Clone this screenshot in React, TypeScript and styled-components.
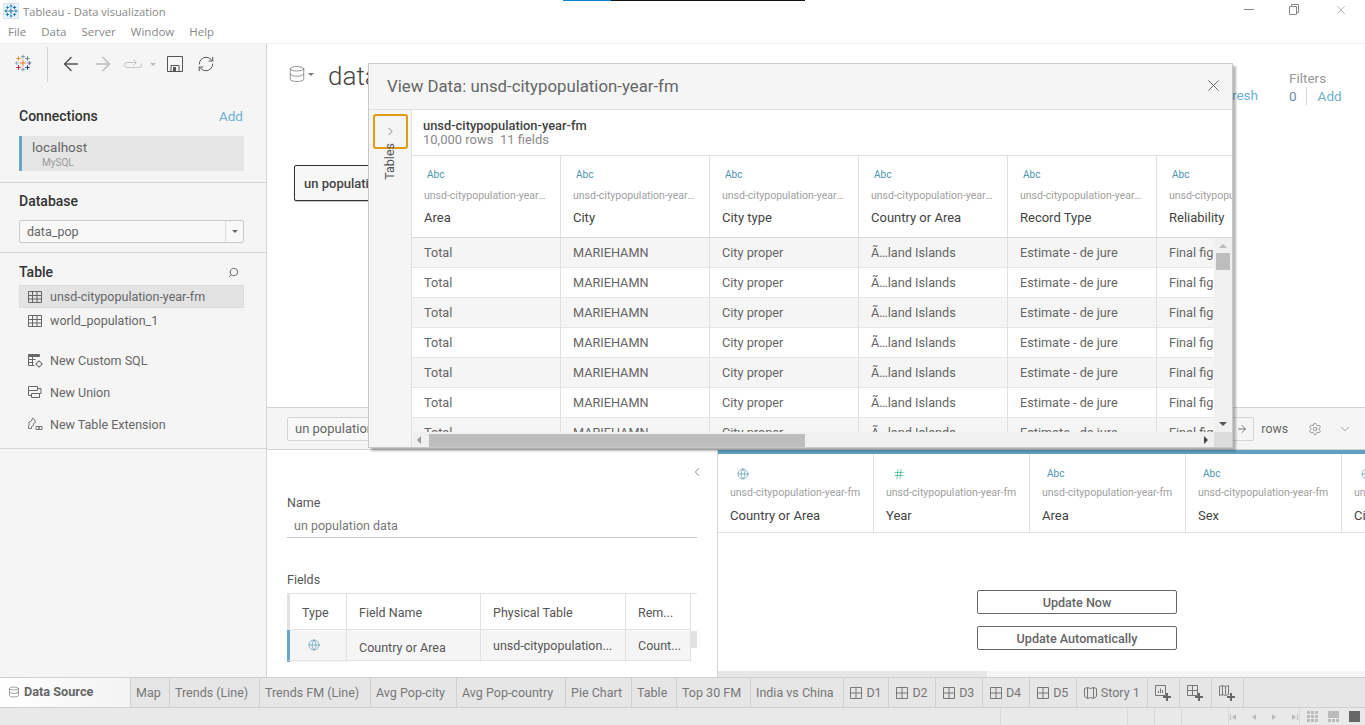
import React from 'react'
import styled, { createGlobalStyle } from 'styled-components'
import { ArrowLeft, ArrowRight, ChevronDown, ChevronLeft, ChevronRight, Database, Globe, Hash, RefreshCw, Search, Settings, X } from 'lucide-react'

const GlobalStyle = createGlobalStyle`
  html, body { margin: 0; padding: 0; background: #fff; }
  * { box-sizing: border-box; }
  body { font-family: Roboto, "Liberation Sans", sans-serif; color: #555; overflow: hidden; }
`

const Page = styled.div`
  position: relative;
  width: 1365px;
  height: 725px;
  overflow: hidden;
  display: flex;
  flex-direction: column;
`

const TitleBar = styled.div`
  position: relative;
  height: 22px;
  display: flex;
  align-items: center;
  padding: 0 0 0 3px;
  gap: 4px;
  font-family: "Open Sans", sans-serif;
  font-size: 11.2px;
  color: #888;
`

const TitleLogo = styled.div`
  width: 16px;
  height: 16px;
  background: #eef5fa;
  border: 1px solid #d5e3ec;
  display: flex;
  align-items: center;
  justify-content: center;
`

const LoadBar = styled.div`
  position: absolute;
  left: 563px;
  top: 0;
  width: 242px;
  height: 1px;
  background: linear-gradient(90deg, #0a84e0 0 48px, #111 48px);
`

const WindowButtons = styled.div`
  margin-left: auto;
  display: flex;
  align-items: center;
  gap: 35px;
  padding: 0 17px 3px 0;
  color: #888;
  svg { flex: none; }
`

const MenuBar = styled.div`
  height: 22px;
  display: flex;
  align-items: center;
  padding: 0 0 2px 8px;
  gap: 15px;
  font-family: "Open Sans", sans-serif;
  font-size: 11.5px;
  color: #888;
  border-bottom: 1px solid #ececec;
`

const Main = styled.div`
  height: 633px;
  display: flex;
`

const Sidebar = styled.aside`
  width: 267px;
  flex: none;
  background: #f5f5f5;
  border-right: 1px solid #d4d4d4;
  display: flex;
  flex-direction: column;
`

const Toolbar = styled.div`
  height: 60px;
  display: flex;
  align-items: flex-start;
  padding-top: 3px;
`

const ToolLogo = styled.div`
  width: 48px;
  height: 35px;
  border-right: 1px solid #d4d4d4;
  padding: 7px 0 0 14px;
`

const ToolIcons = styled.div`
  display: flex;
  align-items: center;
  padding: 6px 0 0 12px;
`

const ToolSlot = styled.span<{ $m: string }>`
  display: flex;
  margin: ${p => p.$m};
`

const Caret = styled.span`
  display: inline-block;
  flex: none;
  width: 0;
  height: 0;
  border-left: 3px solid transparent;
  border-right: 3px solid transparent;
  border-top: 3px solid ${p => p.color || '#bbb'};
`

const Section = styled.section<{ $h: number }>`
  height: ${p => p.$h}px;
  padding: 0 22px 0 19px;
  border-bottom: 1px solid #d4d4d4;
  flex: none;
`

const SectionHead = styled.div<{ $top: number }>`
  display: flex;
  justify-content: space-between;
  align-items: center;
  height: 18px;
  margin-top: ${p => p.$top}px;
  font-size: 14px;
  font-weight: 500;
  color: #333;
`

const AddLink = styled.span`
  font-size: 13.5px;
  font-weight: 400;
  margin-right: 1px;
  color: #6eb0d0;
`

const ConnectionBox = styled.div`
  height: 35px;
  margin-top: 11px;
  background: #e6e6e6;
  border-left: 3px solid #69a7c8;
  padding: 3px 0 0 10px;
  font-size: 13.5px;
  line-height: 16px;
  color: #666;
  small { display: block; font-size: 10px; line-height: 12px; margin-top: 2px; padding-left: 10px; color: #999; }
`

const SelectBox = styled.div`
  height: 23px;
  margin-top: 10px;
  background: #f8f8f8;
  border: 1px solid #c8c8c8;
  border-radius: 2px;
  display: flex;
  align-items: center;
  font-size: 12.5px;
  color: #666;
  padding-left: 7px;
`

const SelectValue = styled.span`
  flex: 1;
`

const SelectButton = styled.div`
  width: 18px;
  height: 21px;
  border-left: 1px solid #ddd;
  display: flex;
  align-items: center;
  justify-content: center;
`

const TableItem = styled.div<{ $on?: boolean }>`
  height: 23px;
  display: flex;
  align-items: center;
  gap: 8px;
  padding-left: 8px;
  font-size: 12.5px;
  color: #666;
  background: ${p => (p.$on ? '#e3e3e3' : 'transparent')};
  border: 1px solid ${p => (p.$on ? '#dcdcdc' : 'transparent')};
  margin-top: ${p => (p.$on ? 4 : 1)}px;
`

const ActionItem = styled.div<{ $top: number }>`
  height: 20px;
  display: flex;
  align-items: center;
  padding-left: 9px;
  margin-top: ${p => p.$top}px;
  font-size: 12.5px;
  color: #666;
`

const ActionIcon = styled.span`
  width: 22px;
  flex: none;
  display: flex;
`

const Workspace = styled.div`
  flex: 1;
  min-width: 0;
  display: flex;
  flex-direction: column;
`

const Canvas = styled.div`
  height: 364px;
  border-bottom: 1px solid #d4d4d4;
  padding: 0 0 0 21px;
  position: relative;
`

const CanvasHeader = styled.div`
  display: flex;
  align-items: flex-start;
  height: 121px;
  padding-top: 15px;
`

const DbMark = styled.div`
  display: flex;
  align-items: center;
  gap: 2px;
  margin-top: 6px;
  width: 40px;
  color: #777;
`

const DataTitle = styled.div`
  font-size: 26px;
  line-height: 34px;
  color: #444;
  font-weight: 300;
`

const HeaderRight = styled.div`
  margin-left: auto;
  display: flex;
  font-size: 13.5px;
  color: #6eb0d0;
  padding-top: 28px;
`

const Filters = styled.div`
  margin-left: 31px;
  width: 76px;
  margin-top: -18px;
  color: #999;
  line-height: 18px;
`

const FilterRow = styled.div`
  display: flex;
  align-items: center;
  b { font-weight: 400; color: #6f8ea0; padding-right: 9px; border-right: 1px solid #d4d4d4; margin-right: 11px; }
  span { color: #6eb0d0; }
`

const LogicalTable = styled.div`
  width: 170px;
  height: 36px;
  margin-left: 6px;
  border: 1px solid #333;
  border-radius: 2px;
  background: #f7f7f7;
  display: flex;
  align-items: center;
  padding-left: 9px;
  font-size: 13px;
  font-weight: 500;
  color: #444;
  box-shadow: 0 1px 1px rgba(0, 0, 0, 0.25);
`

const Strip = styled.div`
  height: 42px;
  background: #f5f5f5;
  border-bottom: 1px solid #d4d4d4;
  display: flex;
  align-items: center;
  padding: 0 13px 0 20px;
  font-size: 13px;
  color: #666;
`

const StripInput = styled.div`
  width: 180px;
  height: 24px;
  border: 1px solid #d4d4d4;
  border-radius: 2px;
  padding: 3px 0 0 7px;
  background: #f8f8f8;
`

const StripArrow = styled.div`
  margin-left: auto;
  width: 80px;
  height: 24px;
  border: 1px solid #d4d4d4;
  border-radius: 2px;
  display: flex;
  align-items: center;
  justify-content: flex-end;
  padding-right: 5px;
  color: #777;
`

const StripText = styled.span`
  margin: 0 20px 0 7px;
  font-size: 12.3px;
`

const Lower = styled.div`
  flex: 1;
  display: flex;
  min-height: 0;
`

const DetailPane = styled.div`
  width: 451px;
  flex: none;
  border-right: 1px solid #d4d4d4;
  padding: 0 20px;
  position: relative;
  overflow: hidden;
`

const CollapseBtn = styled.div`
  display: flex;
  justify-content: flex-end;
  padding-top: 15px;
  height: 45px;
  margin-right: -7px;
  color: #777;
`

const FieldLabel = styled.div`
  font-size: 12.5px;
  line-height: 16px;
  color: #555;
`

const NameInput = styled.div`
  width: 410px;
  height: 24px;
  margin-top: 3px;
  border-bottom: 1px solid #c8c8c8;
  padding: 4px 0 0 7px;
  font-size: 12.5px;
  color: #777;
`

const FieldsBlock = styled.div`
  margin-top: 34px;
`

const FieldsTable = styled.div`
  margin-top: 5px;
  width: 410px;
  height: 69px;
  overflow: hidden;
  display: grid;
  grid-template-columns: 60px 134px 145px 65px;
  grid-auto-rows: 36px 31px 20px;
  font-size: 12.5px;
  color: #555;
  border-top: 1px solid #e2e2e2;
  position: relative;
`

const FieldsCell = styled.div<{ $first?: boolean; $row?: boolean; $center?: boolean; $drop?: number }>`
  display: flex;
  align-items: center;
  justify-content: ${p => (p.$center ? 'center' : 'flex-start')};
  padding: ${p => (p.$center ? '0 8px 0 0' : `${p.$drop || 0}px 0 0 12px`)};
  white-space: nowrap;
  background: ${p => (p.$row ? '#f5f5f5' : '#fff')};
  border-right: 1px solid #e2e2e2;
  border-bottom: 1px solid #e2e2e2;
  border-left: ${p => (p.$first ? `3px solid ${p.$row ? '#69a7c8' : '#e2e2e2'}` : 'none')};
`

const FieldsThumb = styled.div`
  position: absolute;
  right: 0;
  top: 37px;
  width: 6px;
  height: 17px;
  background: #e2e2e2;
`

const PreviewPane = styled.div`
  flex: 1;
  min-width: 0;
  display: flex;
  flex-direction: column;
  border-top: 4px solid #5f9fc0;
  overflow: hidden;
`

const PreviewHead = styled.div`
  display: flex;
  height: 79px;
  border-bottom: 1px solid #e0e0e0;
  flex: none;
`

const PreviewCol = styled.div`
  width: 156px;
  flex: none;
  border-right: 1px solid #e0e0e0;
  padding: 12px 0 0 12px;
  white-space: nowrap;
  overflow: hidden;
`

const TypeIcon = styled.div<{ $color?: string; $pad: number }>`
  height: 15px;
  padding-left: ${p => p.$pad}px;
  display: flex;
  align-items: center;
  font-size: 10px;
  color: ${p => p.$color || '#4f95ad'};
`

const SourceText = styled.div`
  font-size: 10.5px;
  line-height: 14px;
  margin-top: 5px;
  color: #a0a0a0;
`

const ColName = styled.div`
  font-size: 13px;
  line-height: 16px;
  margin-top: 8px;
  color: #444;
`

const UpdateArea = styled.div`
  flex: 1;
  padding: 57px 0 0 259px;
  display: flex;
  flex-direction: column;
  gap: 12px;
`

const UpdateButton = styled.button`
  width: 200px;
  height: 24px;
  padding: 0;
  background: #fff;
  border: 1px solid #666;
  border-radius: 2px;
  font-family: inherit;
  font-size: 12.6px;
  font-weight: 500;
  color: #666;
`

const BottomScroll = styled.div`
  height: 6px;
  background: #f5f5f5;
  flex: none;
  div { width: 269px; height: 6px; background: #e6e6e6; }
`

const Tabs = styled.div`
  height: 31px;
  background: #e6e6e6;
  border-top: 1px solid #d0d0d0;
  border-bottom: 1px solid #d0d0d0;
  display: flex;
  flex: none;
`

const DataSourceTab = styled.div`
  width: 131px;
  background: linear-gradient(90deg, #fff, #f3f3f3);
  border-right: 1px solid #d0d0d0;
  display: flex;
  align-items: center;
  gap: 4px;
  padding: 0 0 2px 8px;
  font-size: 12.7px;
  font-weight: 700;
  color: #666;
`

const Tab = styled.div<{ $w: number }>`
  width: ${p => p.$w}px;
  flex: none;
  border-right: 1px solid #d0d0d0;
  display: flex;
  align-items: center;
  justify-content: center;
  gap: 4px;
  font-size: 12.5px;
  color: #777;
`

const SheetTab = styled(Tab)`
  justify-content: flex-start;
  padding-left: 5px;
  white-space: nowrap;
`

const StatusBar = styled.div`
  flex: 1;
  background: #e9e9e9;
  display: flex;
  justify-content: flex-end;
`

const StatusCell = styled.div<{ $w: number }>`
  width: ${p => p.$w}px;
  flex: none;
  border-left: 1px solid #d8d8d8;
  display: flex;
  align-items: center;
  justify-content: center;
  gap: 12px;
  color: #bbb;
`

const ViewCell = styled(StatusCell)`
  gap: 10px;
  justify-content: flex-start;
  padding-left: 7px;
`

const ViewModal = styled.div`
  position: absolute;
  left: 368px;
  top: 63px;
  width: 865px;
  height: 385px;
  background: #fff;
  border: 1px solid #c8c8c8;
  box-shadow: 3px 3px 2px rgba(0, 0, 0, 0.28);
  display: flex;
  flex-direction: column;
`

const ModalHeader = styled.div`
  height: 46px;
  background: #f5f5f5;
  border-bottom: 1px solid #e0e0e0;
  display: flex;
  align-items: center;
  justify-content: space-between;
  padding: 0 9px 2px 18px;
  font-size: 16.8px;
  color: #666;
  flex: none;
`

const ModalBody = styled.div`
  flex: 1;
  min-height: 0;
  display: flex;
`

const TablesRail = styled.div`
  width: 43px;
  flex: none;
  background: #f5f5f5;
  border-right: 1px solid #e0e0e0;
  padding: 4px 0 0 4px;
`

const RailToggle = styled.div`
  width: 35px;
  height: 35px;
  border: 2px solid #e59a14;
  border-radius: 3px;
  display: flex;
  align-items: center;
  justify-content: center;
  color: #555;
`

const RailLabel = styled.div`
  writing-mode: vertical-rl;
  transform: rotate(180deg);
  margin: -6px 0 0 9px;
  font-size: 12.5px;
  line-height: 16px;
  color: #555;
`

const GridArea = styled.div`
  flex: 1;
  min-width: 0;
  display: flex;
  flex-direction: column;
`

const GridTitle = styled.div`
  height: 46px;
  flex: none;
  padding: 9px 0 0 11px;
  border-bottom: 1px solid #e0e0e0;
  font-size: 13px;
  line-height: 14px;
  color: #8a8a8a;
  strong { display: block; font-weight: 500; font-size: 12.9px; color: #444; }
`

const GridHead = styled.div`
  height: 82px;
  flex: none;
  display: flex;
  overflow: hidden;
  border-bottom: 1px solid #d8d8d8;
`

const GridCol = styled.div`
  width: 149px;
  flex: none;
  border-right: 1px solid #e0e0e0;
  padding: 11px 0 0 12px;
  white-space: nowrap;
  overflow: hidden;
`

const GridSource = styled(SourceText)`
  width: 123px;
  margin-top: 7px;
  overflow: hidden;
  text-overflow: ellipsis;
`

const GridName = styled(ColName)`
  margin-top: 7px;
`

const GridMiddle = styled.div`
  flex: 1;
  min-height: 0;
  display: flex;
`

const GridRows = styled.div`
  flex: 1;
  min-width: 0;
  overflow: hidden;
`

const GridRow = styled.div<{ $alt: boolean }>`
  height: 30px;
  display: flex;
  background: ${p => (p.$alt ? '#f5f5f5' : '#fff')};
  border-bottom: 1px solid #e6e6e6;
`

const GridCell = styled.div`
  width: 149px;
  flex: none;
  border-right: 1px solid #e0e0e0;
  padding-left: 12px;
  display: flex;
  align-items: center;
  font-size: 12.7px;
  white-space: nowrap;
  overflow: hidden;
  color: #666;
`

const VScroll = styled.div`
  width: 18px;
  flex: none;
  background: #f0f0f0;
  display: flex;
  flex-direction: column;
  align-items: center;
  padding: 6px 0;
  justify-content: flex-start;
`

const VThumb = styled.div`
  width: 14px;
  height: 17px;
  margin-top: 5px;
  background: #bdbdbd;
  flex: none;
`

const ArrowUp = styled.span`
  width: 0;
  height: 0;
  border-left: 4px solid transparent;
  border-right: 4px solid transparent;
  border-bottom: 4px solid ${p => p.color || '#bbb'};
`

const ArrowDown = styled.span`
  width: 0;
  height: 0;
  margin-top: auto;
  border-left: 4px solid transparent;
  border-right: 4px solid transparent;
  border-top: 4px solid #555;
`

const HScroll = styled.div`
  height: 15px;
  flex: none;
  background: #f0f0f0;
  display: flex;
  align-items: center;
`

const HThumb = styled.div`
  width: 376px;
  height: 13px;
  margin: 2px 0 0 8px;
  background: #bdbdbd;
`

const ArrowLeftMark = styled.span`
  width: 0;
  height: 0;
  margin-left: 5px;
  border-top: 4px solid transparent;
  border-bottom: 4px solid transparent;
  border-right: 4px solid #999;
`

const ArrowRightMark = styled.span`
  width: 0;
  height: 0;
  margin-left: auto;
  margin-right: 6px;
  border-top: 4px solid transparent;
  border-bottom: 4px solid transparent;
  border-left: 4px solid #444;
`

const ScrollCorner = styled.div`
  width: 18px;
  height: 15px;
  background: #dcdcdc;
`

function TableauLogo({ size, colors, weight = 1.3 }: { size: number; colors: string[]; weight?: number }) {
  const crosses: [number, number, number, number][] = [
    [12, 12, 4.5, 0], [12, 3.5, 2.5, 1], [12, 20.5, 2.5, 2], [3.5, 12, 2.5, 3], [20.5, 12, 2.5, 4],
    [6, 6, 3, 5], [18, 6, 3, 6], [6, 18, 3, 7], [18, 18, 3, 8],
  ]
  return (
    <svg width={size} height={size} viewBox="0 0 24 24" fill="none" strokeWidth={weight}>
      {crosses.map(([x, y, r, c]) => (
        <path key={`${x}-${y}`} d={`M${x - r} ${y}H${x + r}M${x} ${y - r}V${y + r}`} stroke={colors[c % colors.length]} />
      ))}
    </svg>
  )
}

function GridIcon() {
  return (
    <svg width="14" height="14" viewBox="0 0 14 14" fill="none" stroke="#666" strokeWidth="1">
      <path d="M.5 1.500h13v11H.5zM.5 5.500h13M.5 9h13M4.500 1.500v11M9 1.500v11" />
    </svg>
  )
}

function CustomSqlIcon() {
  return (
    <svg width="15" height="15" viewBox="0 0 15 15" fill="none" stroke="#666" strokeWidth="1">
      <path d="M.5 1.500h11v2H.5z" fill="#666" />
      <path d="M.5 3.500v9h6M.5 6.500h7M.5 9.500h5M4.500 3.500v9" />
      <circle cx="11" cy="11" r="2.500" />
      <path d="M11 7.300v1.200M11 13.500v1.200M7.300 11h1.200M13.500 11h1.200" />
    </svg>
  )
}

function UnionIcon() {
  return (
    <svg width="14" height="14" viewBox="0 0 14 14" fill="none" stroke="#666" strokeWidth="1">
      <path d="M.5 1.500h9v4h-9zM3.500 8.500h8v4h-8zM9.500 3.500h3.500v5h-1.500M.5 5.500v5h3" />
    </svg>
  )
}

function ExtensionIcon() {
  return (
    <svg width="16" height="14" viewBox="0 0 16 14" fill="none" stroke="#777" strokeWidth="1">
      <path d="M.5 5.500l3-1.500 1-3 2 1.500 1 3-2 1v2l-2 1v2h-3v-2.500l1-2zM8 9.500h3v3H8zM11 9.500h3v3h-3z" />
    </svg>
  )
}

function DashIcon() {
  return (
    <svg width="12" height="12" viewBox="0 0 12 12" fill="none" stroke="#777" strokeWidth="1">
      <path d="M.5.5h11v11H.5zM6 .5v11M.5 6h11" />
    </svg>
  )
}

function StoryIcon() {
  return (
    <svg width="13" height="12" viewBox="0 0 13 12" fill="none" stroke="#777" strokeWidth="1">
      <path d="M.5 1.500l3-1 3 1 3-1 3 1v8l-3 2-3-1-3 1-3-2zM3.500 .5v10.500M9.500 .5v10.500" />
    </svg>
  )
}

function PlusTabIcon({ kind }: { kind: 'sheet' | 'dash' | 'story' }) {
  return (
    <svg width="16" height="16" viewBox="0 0 16 16" fill="none" stroke="#777" strokeWidth="1">
      {kind === 'sheet' && <path d="M.5.5h10v10H.5zM3.500 8V6M5.500 8V3.500M7.500 8V5" />}
      {kind === 'dash' && <path d="M.5.5h10v10H.5zM5.500 .5v10M.5 5.500h10" />}
      {kind === 'story' && <path d="M.5 1.500l3-1 3 1 3-1v9l-3 1-3-1-3 1zM3.500 .5v10M6.500 1.500v8" />}
      <path d="M12 8v8M8 12h8" stroke="#666" strokeWidth="2" />
    </svg>
  )
}

function SaveIcon() {
  return (
    <svg width="16" height="16" viewBox="0 0 16 16" fill="none" stroke="#555" strokeWidth="1">
      <path d="M.5.5h15v15H.5z" />
      <path d="M4 15.500V9.500h8v6" />
      <rect x="6" y="11" width="3" height="4.500" fill="#555" stroke="none" />
    </svg>
  )
}

function RedoFlowIcon() {
  return (
    <svg width="18" height="12" viewBox="0 0 18 12" fill="none" stroke="#c4c4c4" strokeWidth="1">
      <path d="M12 4.500H3a2.500 2.500 0 0 0 0 5h12a2.500 2.500 0 0 0 2.500-2.500V5.500M9.500 1.500l3 3-3 3" />
    </svg>
  )
}

function WindowRestore() {
  return (
    <svg width="10" height="11" viewBox="0 0 10 11" fill="none" stroke="#888" strokeWidth="1">
      <path d="M.5 2.500h7v8h-7zM2.500 2.500V.5h7v8h-2" />
    </svg>
  )
}

function WindowMinimize() {
  return (
    <svg width="10" height="11" viewBox="0 0 10 11" fill="none" stroke="#888" strokeWidth="1">
      <path d="M0 5.500h10" />
    </svg>
  )
}

function NavIcon({ dir, bar }: { dir: 'l' | 'r'; bar?: boolean }) {
  const tri = dir === 'l' ? 'M6 1v6L2 4z' : 'M2 1v6l4-3z'
  return (
    <svg width="8" height="8" viewBox="0 0 8 8" fill="#bbb">
      <path d={tri} />
      {bar && <path d={dir === 'l' ? 'M0 1h1v6H0z' : 'M7 1h1v6H7z'} />}
    </svg>
  )
}

function ViewIcon({ kind }: { kind: 0 | 1 | 2 }) {
  if (kind === 2) return <svg width="11" height="11"><rect width="11" height="11" fill="#666" /></svg>
  if (kind === 1) {
    return (
      <svg width="11" height="11" fill="#bbb">
        <rect width="11" height="7" />
        <path d="M0 8h3v3H0zM4 8h3v3H4zM8 8h3v3H8z" />
      </svg>
    )
  }
  return (
    <svg width="11" height="11" fill="#bbb">
      <path d="M0 0h3v3H0zM4 0h3v3H4zM8 0h3v3H8zM0 4h3v3H0zM4 4h3v3H4zM8 4h3v3H8zM0 8h3v3H0zM4 8h3v3H4zM8 8h3v3H8z" />
    </svg>
  )
}

const gridColumns = ['Area', 'City', 'City type', 'Country or Area', 'Record Type', 'Reliability']
const gridValues = ['Total', 'MARIEHAMN', 'City proper', 'Ã…land Islands', 'Estimate - de jure', 'Final figure, complete']
const previewColumns = [
  { name: 'Country or Area', type: 'globe' },
  { name: 'Year', type: 'hash' },
  { name: 'Area', type: 'abc' },
  { name: 'Sex', type: 'abc' },
  { name: 'City', type: 'globe' },
]
const sheetTabs: [string, number][] = [
  ['Map', 39], ['Trends (Line)', 90], ['Trends FM (Line)', 111], ['Avg Pop-city', 86], ['Avg Pop-country', 109],
  ['Pie Chart', 66], ['Table', 45], ['Top 30 FM', 74], ['India vs China', 93],
]
const dashTabs: [string, number][] = [['D1', 45], ['D2', 47], ['D3', 46.5], ['D4', 47], ['D5', 47.5]]
const logoColors = ['#e8762b', '#7099a6', '#7099a6', '#9aa7ad', '#5b6591', '#eb9129', '#5b879b', '#c72037', '#1f447e']

export default function App() {
  return (
    <Page>
      <GlobalStyle />
      <TitleBar>
        <LoadBar />
        <TitleLogo>
          <TableauLogo size={14} colors={['#1f6fa5', '#2c7fb0', '#3a8cb8']} weight={1.8} />
        </TitleLogo>
        <span>Tableau - Data visualization</span>
        <WindowButtons>
          <WindowMinimize />
          <WindowRestore />
          <X size={14} strokeWidth={1} />
        </WindowButtons>
      </TitleBar>
      <MenuBar>
        <span>File</span>
        <span>Data</span>
        <span>Server</span>
        <span>Window</span>
        <span>Help</span>
      </MenuBar>
      <Main>
        <Sidebar>
          <Toolbar>
            <ToolLogo>
              <TableauLogo size={18} colors={logoColors} />
            </ToolLogo>
            <ToolIcons>
              <ArrowLeft size={22} color="#555" strokeWidth={1.6} />
              <ArrowRight size={22} color="#bbb" strokeWidth={1.6} style={{ marginLeft: 10 }} />
              <ToolSlot $m="0 0 0 10px"><RedoFlowIcon /></ToolSlot>
              <ToolSlot $m="0 11px 0 8px"><Caret /></ToolSlot>
              <SaveIcon />
              <RefreshCw size={18} color="#555" strokeWidth={1.3} style={{ marginLeft: 14 }} />
            </ToolIcons>
          </Toolbar>
          <Section $h={79}>
            <SectionHead $top={3}>
              <span>Connections</span>
              <AddLink>Add</AddLink>
            </SectionHead>
            <ConnectionBox>
              localhost
              <small>MySQL</small>
            </ConnectionBox>
          </Section>
          <Section $h={70}>
            <SectionHead $top={9}>
              <span>Database</span>
            </SectionHead>
            <SelectBox>
              <SelectValue>data_pop</SelectValue>
              <SelectButton><Caret color="#666" /></SelectButton>
            </SelectBox>
          </Section>
          <Section $h={196}>
            <SectionHead $top={10}>
              <span>Table</span>
              <Search size={11} color="#666" style={{ transform: 'scaleX(-1)', marginRight: 5 }} />
            </SectionHead>
            <TableItem $on>
              <GridIcon />
              unsd-citypopulation-year-fm
            </TableItem>
            <TableItem>
              <GridIcon />
              world_population_1
            </TableItem>
            <ActionItem $top={18}><ActionIcon><CustomSqlIcon /></ActionIcon>New Custom SQL</ActionItem>
            <ActionItem $top={12}><ActionIcon><UnionIcon /></ActionIcon>New Union</ActionItem>
            <ActionItem $top={12}><ActionIcon><ExtensionIcon /></ActionIcon>New Table Extension</ActionItem>
          </Section>
        </Sidebar>
        <Workspace>
          <Canvas>
            <CanvasHeader>
              <DbMark>
                <Database size={18} strokeWidth={1} />
                <Caret color="#777" />
              </DbMark>
              <DataTitle>data_pop</DataTitle>
              <HeaderRight>
                <span>Refresh</span>
                <Filters>
                  Filters
                  <FilterRow>
                    <b>0</b>
                    <span>Add</span>
                  </FilterRow>
                </Filters>
              </HeaderRight>
            </CanvasHeader>
            <LogicalTable>un population data</LogicalTable>
          </Canvas>
          <Strip>
            <StripInput>un population data</StripInput>
            <StripArrow><ArrowRight size={12} /></StripArrow>
            <StripText>rows</StripText>
            <Settings size={14} strokeWidth={1.2} color="#777" />
            <ChevronDown size={14} strokeWidth={1.2} color="#777" style={{ marginLeft: 16 }} />
          </Strip>
          <Lower>
            <DetailPane>
              <CollapseBtn><ChevronLeft size={14} strokeWidth={1.4} /></CollapseBtn>
              <FieldLabel>Name</FieldLabel>
              <NameInput>un population data</NameInput>
              <FieldsBlock>
                <FieldLabel>Fields</FieldLabel>
                <FieldsTable>
                  <FieldsCell $first $drop={2}>Type</FieldsCell>
                  <FieldsCell $drop={2}>Field Name</FieldsCell>
                  <FieldsCell $drop={2}>Physical Table</FieldsCell>
                  <FieldsCell $drop={2}>Rem...</FieldsCell>
                  <FieldsCell $first $row $center><Globe size={12} color="#4f95ad" strokeWidth={1.3} /></FieldsCell>
                  <FieldsCell $row $drop={4}>Country or Area</FieldsCell>
                  <FieldsCell $row>unsd-citypopulation...</FieldsCell>
                  <FieldsCell $row>Count...</FieldsCell>
                  <FieldsCell $first $row />
                  <FieldsCell />
                  <FieldsCell />
                  <FieldsCell />
                  <FieldsThumb />
                </FieldsTable>
              </FieldsBlock>
            </DetailPane>
            <PreviewPane>
              <PreviewHead>
                {previewColumns.map(col => (
                  <PreviewCol key={col.name}>
                    <TypeIcon $pad={col.type === 'abc' ? 5 : 7} $color={col.type === 'hash' ? '#17a678' : undefined}>
                      {col.type === 'globe' && <Globe size={12} strokeWidth={1.3} />}
                      {col.type === 'hash' && <Hash size={12} strokeWidth={1.2} />}
                      {col.type === 'abc' && 'Abc'}
                    </TypeIcon>
                    <SourceText>unsd-citypopulation-year-fm</SourceText>
                    <ColName>{col.name}</ColName>
                  </PreviewCol>
                ))}
              </PreviewHead>
              <UpdateArea>
                <UpdateButton>Update Now</UpdateButton>
                <UpdateButton>Update Automatically</UpdateButton>
              </UpdateArea>
              <BottomScroll><div /></BottomScroll>
            </PreviewPane>
          </Lower>
        </Workspace>
      </Main>
      <Tabs>
        <DataSourceTab>
          <Database size={12} strokeWidth={1.2} />
          Data Source
        </DataSourceTab>
        {sheetTabs.map(([label, w]) => <SheetTab key={label} $w={w}>{label}</SheetTab>)}
        {dashTabs.map(([label, w]) => <Tab key={label} $w={w}><DashIcon />{label}</Tab>)}
        <Tab $w={70.5}><StoryIcon />Story 1</Tab>
        <Tab $w={32}><PlusTabIcon kind="sheet" /></Tab>
        <Tab $w={32}><PlusTabIcon kind="dash" /></Tab>
        <Tab $w={32}><PlusTabIcon kind="story" /></Tab>
      </Tabs>
      <StatusBar>
        <StatusCell $w={127} />
        <StatusCell $w={27} />
        <StatusCell $w={27} />
        <StatusCell $w={47} />
        <StatusCell $w={71}>
          <NavIcon dir="l" bar />
          <NavIcon dir="l" />
          <NavIcon dir="r" />
          <NavIcon dir="r" bar />
        </StatusCell>
        <ViewCell $w={66}>
          <ViewIcon kind={0} />
          <ViewIcon kind={1} />
          <ViewIcon kind={2} />
        </ViewCell>
      </StatusBar>
      <ViewModal>
        <ModalHeader>
          <span>View Data: unsd-citypopulation-year-fm</span>
          <X size={19} strokeWidth={1.1} color="#555" />
        </ModalHeader>
        <ModalBody>
          <TablesRail>
            <RailToggle><ChevronRight size={13} strokeWidth={1.3} /></RailToggle>
            <RailLabel>Tables</RailLabel>
          </TablesRail>
          <GridArea>
            <GridTitle>
              <strong>unsd-citypopulation-year-fm</strong>
              10,000 rows&nbsp; 11 fields
            </GridTitle>
            <GridHead>
              {gridColumns.map(name => (
                <GridCol key={name}>
                  <TypeIcon $pad={3}>Abc</TypeIcon>
                  <GridSource>unsd-citypopulation-year-fm</GridSource>
                  <GridName>{name}</GridName>
                </GridCol>
              ))}
            </GridHead>
            <GridMiddle>
              <GridRows>
                {[0, 1, 2, 3, 4, 5, 6].map(row => (
                  <GridRow key={row} $alt={row % 2 === 0}>
                    {gridValues.map(value => <GridCell key={value}>{value}</GridCell>)}
                  </GridRow>
                ))}
              </GridRows>
              <VScroll>
                <ArrowUp />
                <VThumb />
                <ArrowDown />
              </VScroll>
            </GridMiddle>
            <HScroll>
              <ArrowLeftMark />
              <HThumb />
              <ArrowRightMark />
              <ScrollCorner />
            </HScroll>
          </GridArea>
        </ModalBody>
      </ViewModal>
    </Page>
  )
}
